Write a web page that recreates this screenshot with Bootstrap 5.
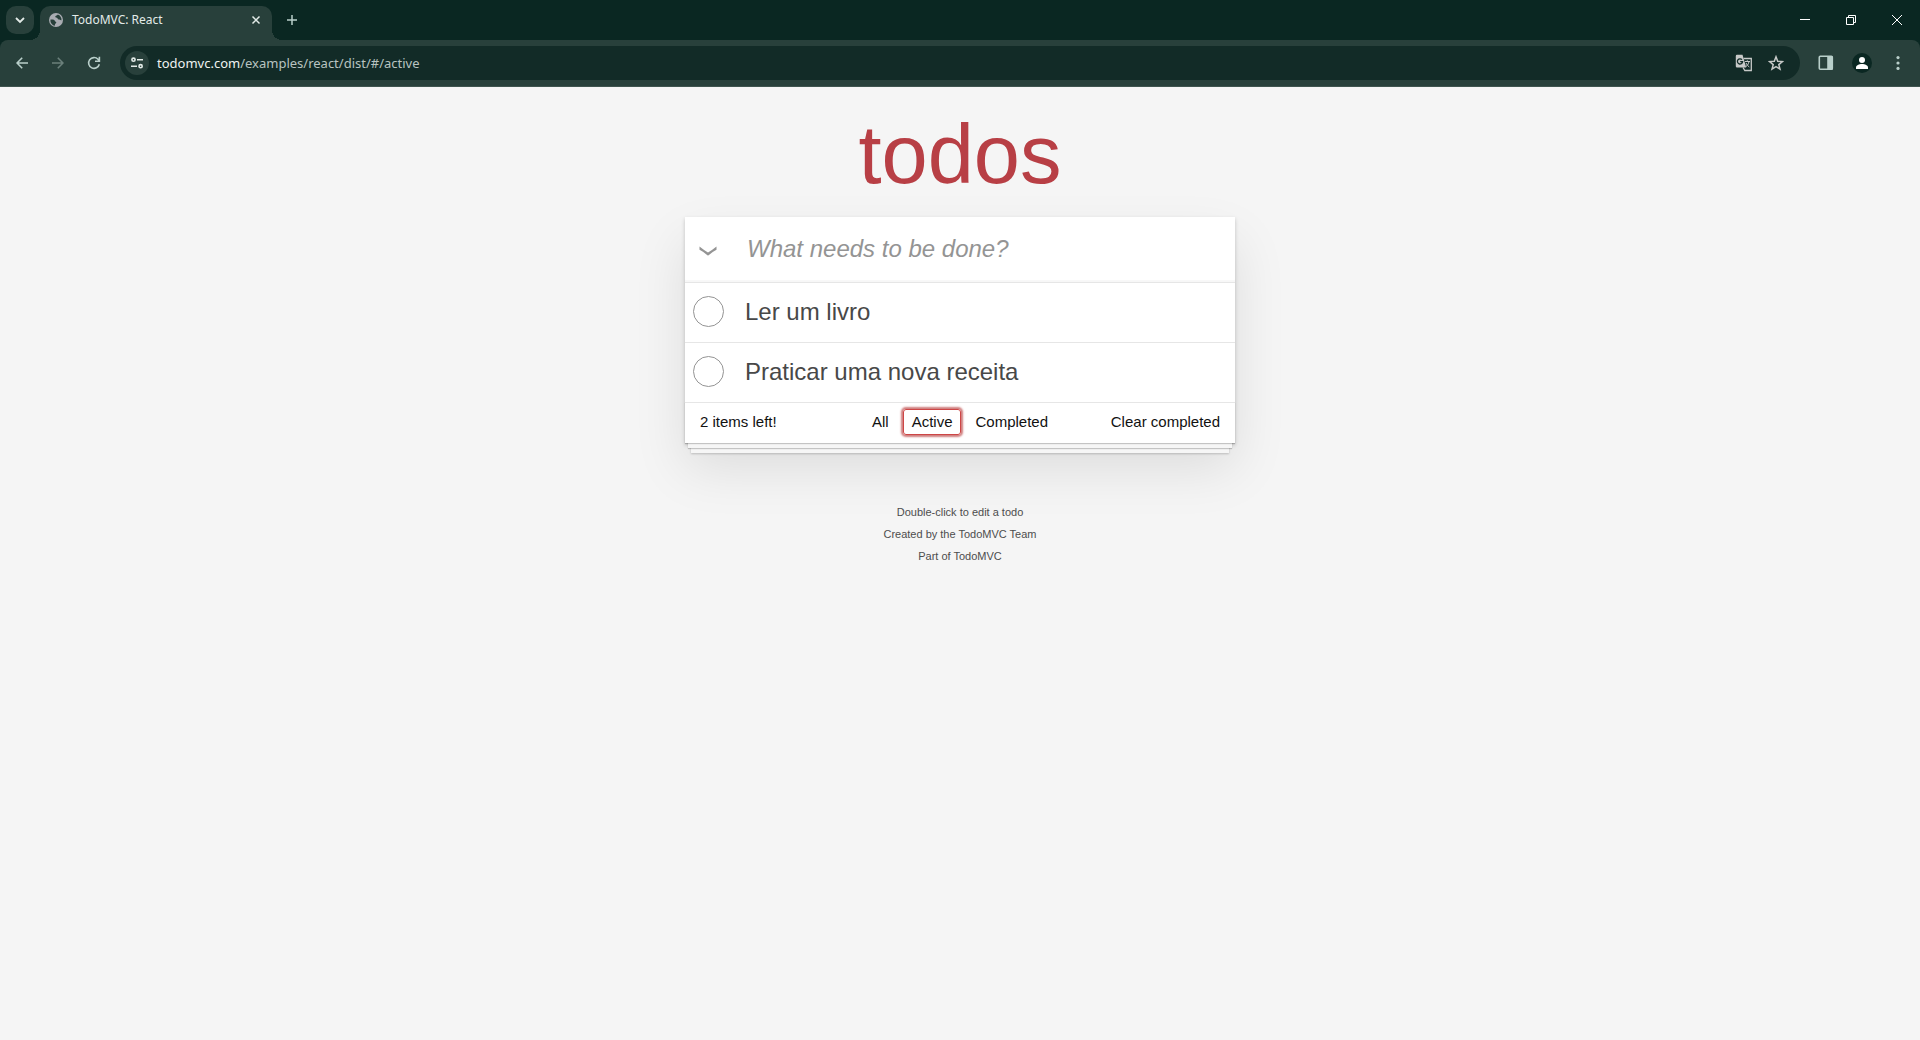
<!DOCTYPE html>
<html lang="en">
<head>
<meta charset="utf-8">
<meta name="viewport" content="width=device-width, initial-scale=1">
<title>TodoMVC: React</title>
<link href="https://cdn.jsdelivr.net/npm/bootstrap@5.3.0/dist/css/bootstrap.min.css" rel="stylesheet">
<style>
  body { background: #f5f5f5; font-family: "Liberation Sans", Arial, sans-serif; color: #111; }
  button { border: 0; background: none; padding: 0; color: inherit; }

  /* Browser frame */
  .browser { font-family: "Noto Sans", sans-serif; background: #0a2722; color: #e3ebe8; }
  .browser button, .browser a { display: flex; align-items: center; justify-content: center; flex: none; }
  .tab-strip { height: 40px; padding-left: 6px; }
  .tab-search { width: 28px; height: 28px; border-radius: 10px; background: #28403b; }
  .open-tab { position: relative; width: 232px; height: 34px; margin: 6px 0 0 6px; padding: 0 8px 6px; background: #28403b; border-radius: 10px 10px 0 0; font-size: 12px; line-height: 16px; }
  .open-tab::before, .open-tab::after { content: ""; position: absolute; bottom: 0; width: 10px; height: 10px; }
  .open-tab::before { left: -10px; background: radial-gradient(circle at 0 0, transparent 10px, #28403b 10px); }
  .open-tab::after { right: -10px; background: radial-gradient(circle at 100% 0, transparent 10px, #28403b 10px); }
  .tab-button { width: 16px; height: 16px; }
  .new-tab { width: 28px; height: 28px; margin-left: 6px; }
  .window-button { width: 46px; height: 32px; }
  .toolbar { height: 47px; padding: 0 4px; background: #28403b; border-radius: 8px 8px 0 0; border-bottom: 1px solid #3f544f; color: #b9cfca; }
  .tool-button { width: 36px; height: 34px; }
  .tool-button:disabled { color: #6b807b; }
  .omnibox { height: 34px; margin: 0 8px; padding: 0 8px 0 5px; border-radius: 17px; background: #122b27; }
  .site-info { width: 24px; height: 24px; border-radius: 50%; background: #28403b; color: #e3ebe8; }
  .address { font-size: 13px; line-height: 18px; color: #b8c3c0; }
  .address b { font-weight: 400; color: #eef3f1; }
  .omni-button { width: 32px; height: 32px; color: #c7c9c8; }
  .avatar { width: 20px; height: 20px; margin: 0 8px; border-radius: 50%; background: #0a2722; color: #fff; }

  /* Todo application */
  .todo-column { max-width: 550px; }
  .app-title { font-size: 83px; line-height: 124px; font-weight: 400; color: #b83f45; margin: 0; padding-top: 6px; text-align: center; }
  .todo-app { background: #fff; box-shadow: 0 2px 4px rgba(0,0,0,.2), 0 25px 50px rgba(0,0,0,.1); }
  .new-todo { height: 65px; box-shadow: inset 0 -2px 1px rgba(0,0,0,.03); }
  .toggle-all { width: 45px; color: #949494; padding: 2px 0 0 1px; }
  .new-todo input[type=text] { border: 0; outline: 0; background: none; padding: 0 16px 1px 17px; font-size: 24px; line-height: 32px; }
  .new-todo input::placeholder { font-style: italic; color: #949494; opacity: 1; }
  .todo-items li { height: 60px; border-top: 1px solid #e6e6e6; padding: 0 15px 2px 8px; }
  .todo-items input { appearance: none; width: 31px; height: 31px; margin: 0; border: 1px solid #949494; border-radius: 50%; flex: none; }
  .todo-items label { font-size: 24px; line-height: 28px; color: #484848; padding-left: 21px; }
  .todo-footer { height: 41px; border-top: 1px solid #e6e6e6; padding: 0 15px 2px; font-size: 15px; line-height: 20px; display: grid; grid-template-columns: 1fr auto 1fr; align-items: center; background: #fff;
    box-shadow: 0 1px 1px rgba(0,0,0,.2), 0 8px 0 -3px #f6f6f6, 0 9px 1px -3px rgba(0,0,0,.2), 0 16px 0 -6px #f6f6f6, 0 17px 2px -6px rgba(0,0,0,.2); }
  .todo-footer a { display: block; color: #111; text-decoration: none; border: 1px solid transparent; border-radius: 3px; padding: 2px 8px; }
  .todo-footer a.current { border-color: #ce4646; box-shadow: 0 0 2px 2px #cf7d7d; }
  .todo-filters { gap: 5px; }
  .page-info { margin-top: 64px; font-size: 11px; line-height: 11px; color: #4d4d4d; }
  .page-info p { margin: 0 0 11px; }
  .page-info a { color: inherit; text-decoration: none; }
</style>
<script src="https://cdn.jsdelivr.net/npm/bootstrap@5.3.0/dist/js/bootstrap.bundle.min.js"></script>
</head>
<body>
<header class="browser">
  <div class="tab-strip d-flex align-items-center">
    <button class="tab-search" aria-label="Search tabs"><svg width="10" height="8" viewBox="0 0 10 8" fill="none" stroke="currentColor" stroke-width="1.800"><path d="M1 2l4 4 4-4"/></svg></button>
    <div class="open-tab d-flex align-items-center">
      <svg width="16" height="16" viewBox="0 0 16 16"><circle cx="8" cy="8" r="7" fill="#a9acb2"/><path d="M2.500 7.500c2.700-.3 4.200.1 4.500 1.500.1.800 1.300.5 1.300 1.500 0 .9-1.500.9-1.500 3.200C4 13.200 2 10.600 2.500 7.500zM9.800 2.500c-.2 1-1.600.8-2.300 1.600-.7 1 .2 1.500 1.300 1.600 1 .2.700 1.800 2 1.900 1 .1 1.600.9 2.700.6.200-2.600-1.400-5-3.700-5.700z" fill="#28403b"/></svg>
      <span class="flex-grow-1 ms-2">TodoMVC: React</span>
      <button class="tab-button" aria-label="Close tab"><svg width="10" height="10" viewBox="0 0 10 10" stroke="currentColor" stroke-width="1.500"><path d="M1.500 1.500l7 7M8.500 1.500l-7 7"/></svg></button>
    </div>
    <button class="new-tab" aria-label="New tab"><svg width="12" height="12" viewBox="0 0 12 12" stroke="#b9cfca" stroke-width="1.500"><path d="M6 1v10M1 6h10"/></svg></button>
    <div class="d-flex ms-auto text-white">
      <button class="window-button" aria-label="Minimize"><svg width="10" height="10" viewBox="0 0 10 10" stroke="currentColor"><path d="M0 4.500h10"/></svg></button>
      <button class="window-button" aria-label="Restore"><svg width="10" height="10" viewBox="0 0 10 10" fill="none" stroke="currentColor"><path d="M.5 2.500h7v7h-7zM2.500 2.500v-2h7v7h-2"/></svg></button>
      <button class="window-button" aria-label="Close"><svg width="10" height="10" viewBox="0 0 10 10" stroke="currentColor"><path d="M0 0l10 10M10 0L0 10"/></svg></button>
    </div>
  </div>
  <div class="toolbar d-flex align-items-center">
    <button class="tool-button" aria-label="Back"><svg width="12" height="12" viewBox="0 0 12 12" fill="none" stroke="currentColor" stroke-width="1.600"><path d="M12 6H1.200M6.200.7L1 6l5.200 5.300"/></svg></button>
    <button class="tool-button" aria-label="Forward" disabled><svg width="12" height="12" viewBox="0 0 12 12" fill="none" stroke="currentColor" stroke-width="1.600"><path d="M0 6h10.800M5.800.7L11 6l-5.200 5.300"/></svg></button>
    <button class="tool-button" aria-label="Reload"><svg width="14" height="14" viewBox="0 0 14 14" fill="none" stroke="currentColor" stroke-width="1.600"><path d="M12.300 8.200A5.400 5.400 0 1 1 11 3.300l1.300 1.500M12.400.8v4.500H8"/></svg></button>
    <div class="omnibox d-flex align-items-center flex-grow-1">
      <button class="site-info" aria-label="Site information"><svg width="12" height="12" viewBox="0 0 12 12" fill="none" stroke="currentColor" stroke-width="1.600"><circle cx="2.500" cy="2.700" r="1.600"/><path d="M6 2.700h6M0 9.200h6"/><circle cx="9.600" cy="9.200" r="1.600"/></svg></button>
      <div class="address flex-grow-1 ms-2" role="textbox" aria-label="Address" contenteditable="true" spellcheck="false"><b>todomvc.com</b>/examples/react/dist/#/active</div>
      <button class="omni-button" aria-label="Translate this page"><svg width="18" height="18" viewBox="0 0 18 18"><path d="M2 .8h5.500l3.700 12.700H2A1.200 1.200 0 0 1 .8 12.300V2A1.200 1.200 0 0 1 2 .8z" fill="currentColor"/><path d="M8.600 4.500h7.700v12H9.800l-1.800-3" fill="none" stroke="currentColor" stroke-width="1.300"/><path d="M7 5.700A2.600 2.600 0 1 0 7.600 7.700H5.200" fill="none" stroke="#122b27" stroke-width="1.300"/><path d="M10 7.500h5M12.300 6.300v1.200M14 7.500c-.5 2.500-1.500 4-3 5M11 9c.8 1.800 2 3 3.300 4" fill="none" stroke="currentColor"/></svg></button>
      <button class="omni-button" aria-label="Bookmark this tab"><svg width="16" height="16" viewBox="0 0 16 16" fill="none" stroke="currentColor" stroke-width="1.500"><path d="M8 1.800l1.700 4.400 4.700.4-3.600 3 1.200 4.600-4-2.500-4 2.500 1.200-4.600-3.600-3 4.700-.4z"/></svg></button>
    </div>
    <button class="tool-button" aria-label="Side panel"><svg width="16" height="16" viewBox="0 0 16 16" fill="none" stroke="currentColor" stroke-width="1.600"><rect x="1.300" y="1.300" width="13" height="13" rx="1"/><path d="M10 2h4v12h-4z" fill="currentColor"/></svg></button>
    <button class="avatar" aria-label="Profile"><svg width="14" height="14" viewBox="0 0 14 14" fill="currentColor"><circle cx="7" cy="4" r="3"/><path d="M1 13v-1.500C1 9.500 4 8 7 8s6 1.500 6 3.500V13z"/></svg></button>
    <button class="tool-button" aria-label="Menu"><svg width="4" height="14" viewBox="0 0 4 14" fill="currentColor"><circle cx="2" cy="1.600" r="1.600"/><circle cx="2" cy="7" r="1.600"/><circle cx="2" cy="12.400" r="1.600"/></svg></button>
  </div>
</header>

<main class="todo-column mx-auto">
  <h1 class="app-title">todos</h1>
  <section class="todo-app">
    <div class="new-todo d-flex">
      <input class="visually-hidden" type="checkbox" id="toggle-all">
      <label class="toggle-all d-flex align-items-center justify-content-center" for="toggle-all" aria-label="Toggle all"><svg width="18" height="10" viewBox="0 0 18 10" fill="currentColor"><path d="M.5.500Q5 4.200 9 6.500 13 4.200 17.500.500V3.800Q13 6 9 9.800 5 6 .500 3.800z"/></svg></label>
      <input class="flex-grow-1" type="text" placeholder="What needs to be done?" aria-label="New todo">
    </div>
    <ul class="todo-items list-unstyled m-0">
      <li class="d-flex align-items-center"><input type="checkbox" id="todo-1"><label for="todo-1">Ler um livro</label></li>
      <li class="d-flex align-items-center"><input type="checkbox" id="todo-2"><label for="todo-2">Praticar uma nova receita</label></li>
    </ul>
    <footer class="todo-footer">
      <span>2 items left!</span>
      <ul class="todo-filters list-unstyled d-flex m-0">
        <li><a href="#/">All</a></li>
        <li><a class="current" href="#/active">Active</a></li>
        <li><a href="#/completed">Completed</a></li>
      </ul>
      <button class="text-end">Clear completed</button>
    </footer>
  </section>
  <footer class="page-info text-center">
    <p>Double-click to edit a todo</p>
    <p>Created by the TodoMVC Team</p>
    <p>Part of <a href="https://todomvc.com">TodoMVC</a></p>
  </footer>
</main>
</body>
</html>
